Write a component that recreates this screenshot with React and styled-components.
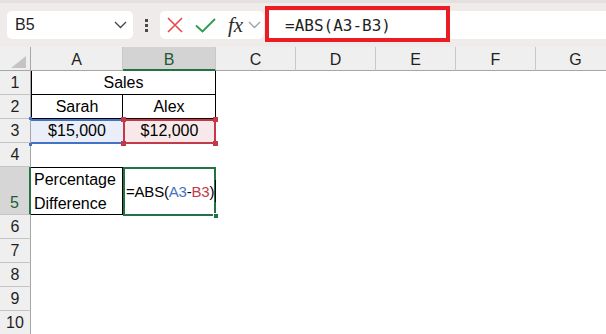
import React from 'react';
import styled, { createGlobalStyle } from 'styled-components';

const GlobalStyle = createGlobalStyle`
  *, *::before, *::after { box-sizing: border-box; }
  html, body { margin: 0; padding: 0; background: #fff; }
  body { font-family: "Liberation Sans", Arial, sans-serif; }
`;

const Frame = styled.div`
  width: 606px;
  height: 334px;
  overflow: hidden;
  display: flex;
  flex-direction: column;
  background: #fff;
`;

const Toolbar = styled.div`
  height: 47px;
  flex: none;
  display: flex;
  align-items: center;
  padding-left: 7px;
  background: #efebeb;
  border-top: 3px solid #e4e0e0;
`;

const NameBox = styled.div`
  width: 126px;
  height: 28px;
  display: flex;
  align-items: center;
  justify-content: space-between;
  padding: 0 6px 0 8px;
  background: #fff;
  border-radius: 5px;
  font-size: 16px;
  color: #1f1f1f;
`;

const Grip = styled.div`
  width: 27px;
  display: flex;
  flex-direction: column;
  align-items: center;
  gap: 2px;
`;

const Dot = styled.span`
  width: 3px;
  height: 3px;
  background: #4a4a4a;
`;

const FxBox = styled.div`
  width: 104px;
  height: 28px;
  display: flex;
  align-items: center;
  padding-left: 7px;
  gap: 12px;
  background: #fff;
  border-radius: 5px;
`;

const FxLabel = styled.span`
  font-family: "Liberation Serif", "Times New Roman", serif;
  font-style: italic;
  font-size: 21px;
  color: #2b2b2b;
  display: flex;
  align-items: center;
  gap: 5px;
`;

const FormulaBar = styled.div`
  position: relative;
  flex: 1;
  height: 28px;
  margin-left: 2px;
  display: flex;
  align-items: center;
  padding-left: 19px;
  background: #fff;
  border-radius: 5px 0 0 5px;
  font-family: "DejaVu Sans Mono", "Liberation Mono", monospace;
  font-size: 16px;
  color: #1f1f1f;
`;

/* red call-out drawn over the formula bar */
const Highlight = styled.div`
  position: absolute;
  top: -5px;
  left: -1px;
  width: 185px;
  height: 36px;
  border: 4px solid #ec1c24;
`;

const Sheet = styled.div`
  display: grid;
  grid-template-columns: 31px 92px 93px repeat(5, 80px);
  grid-template-rows: 24px 24px 24px 24px 24px 48px repeat(5, 24px);
`;

const Corner = styled.div`
  display: flex;
  align-items: flex-end;
  justify-content: flex-end;
  padding: 0 4px 2px 0;
  background: #efefef;
  border-right: 1px solid #a6a6a6;
  border-bottom: 1px solid #a6a6a6;
`;

const Triangle = styled.span`
  width: 15px;
  height: 12px;
  background: #c4c4c4;
  clip-path: polygon(100% 0, 100% 100%, 0 100%);
`;

const ColHead = styled.div`
  display: flex;
  align-items: center;
  justify-content: center;
  padding-top: 3px;
  font-size: 16px;
  background: ${p => (p.$sel ? '#d3d3d3' : '#efefef')};
  color: ${p => (p.$sel ? '#1d5a36' : '#1f1f1f')};
  border-right: 1px solid #c8c8c8;
  border-bottom: ${p => (p.$sel ? '2px solid #217346' : '1px solid #a6a6a6')};
`;

const RowHead = styled.div`
  display: flex;
  align-items: flex-end;
  justify-content: center;
  line-height: 22px;
  font-size: 16px;
  background: ${p => (p.$sel ? '#d6d6d6' : '#efefef')};
  color: ${p => (p.$sel ? '#1d5a36' : '#1f1f1f')};
  border-right: ${p => (p.$sel ? '2px solid #217346' : '1px solid #a6a6a6')};
  border-bottom: 1px solid #c4c4c4;
`;

const line = on => (on ? '1px solid #000' : 'none');

const Cell = styled.div`
  position: relative;
  display: flex;
  align-items: center;
  justify-content: ${p => (p.$align === 'left' ? 'flex-start' : 'center')};
  grid-column: ${p => (p.$span ? `span ${p.$span}` : 'auto')};
  padding: 0 3px;
  font-size: 16px;
  color: #000;
  white-space: nowrap;
  background: ${p => p.$bg || '#fff'};
  border-top: ${p => line(p.$edges?.includes('t'))};
  border-right: ${p => line(p.$edges?.includes('r'))};
  border-bottom: ${p => line(p.$edges?.includes('b'))};
  border-left: ${p => line(p.$edges?.includes('l'))};
`;

const WrapCell = styled(Cell)`
  display: block;
  white-space: normal;
  line-height: 24px;
  padding-top: 0;
`;

const RangeFrame = styled.div`
  position: absolute;
  z-index: 1;
  top: 0;
  bottom: -1px;
  left: 0;
  right: 0;
  border: 2px solid ${p => p.$color};
  ${p => p.$open && 'border-left: none; border-right: none;'}
  pointer-events: none;
`;

const Handle = styled.span`
  position: absolute;
  z-index: 2;
  width: ${p => p.$size || 5}px;
  height: ${p => p.$size || 5}px;
  background: ${p => p.$color};
  ${p => (p.$y === 'top' ? 'top: -2px;' : 'bottom: -3px;')}
  ${p => (p.$x === 'left' ? 'left: -2px;' : 'right: -2px;')}
`;

const FillHandle = styled.span`
  position: absolute;
  z-index: 2;
  right: -3px;
  bottom: -4px;
  width: 6px;
  height: 6px;
  background: #217346;
  border: 1px solid #fff;
`;

const Ref = styled.span`
  color: ${p => p.$color};
`;

const Caret = styled.span`
  position: relative;
  z-index: 3;
  display: inline-block;
  width: 1px;
  height: 22px;
  margin-left: 1px;
  background: #000;
`;

const Formula = styled.span`
  font-size: 15px;
  letter-spacing: -0.2px;
  display: flex;
  align-items: center;
`;

const BLUE = '#4472c4';
const RED = '#c4394a';
const columns = ['A', 'B', 'C', 'D', 'E', 'F', 'G'];

const Chevron = ({ color }) => (
  <svg width="13" height="8" viewBox="0 0 13 8">
    <polyline points="1,1 6.5,6.5 12,1" fill="none" stroke={color} strokeWidth="1.3" />
  </svg>
);

const Empties = ({ count }) =>
  Array.from({ length: count }, (_, i) => <Cell key={i} />);

const App = () => {
  return (
    <Frame>
      <GlobalStyle />
      <Toolbar>
        <NameBox>
          B5
          <Chevron color="#444" />
        </NameBox>
        <Grip>
          <Dot />
          <Dot />
          <Dot />
        </Grip>
        <FxBox>
          <svg width="16" height="16" viewBox="0 0 16 16">
            <path d="M1 1 L15 15 M15 1 L1 15" stroke="#e5484d" strokeWidth="1.6" />
          </svg>
          <svg width="21" height="15" viewBox="0 0 21 15">
            <polyline points="1,7.5 7.5,13.5 20,1" fill="none" stroke="#2f9a50" strokeWidth="1.8" />
          </svg>
          <FxLabel>
            fx
            <Chevron color="#a0a0a0" />
          </FxLabel>
        </FxBox>
        <FormulaBar>
          =ABS(A3-B3)
          <Highlight />
        </FormulaBar>
      </Toolbar>

      <Sheet>
        <Corner>
          <Triangle />
        </Corner>
        {columns.map(c => (
          <ColHead key={c} $sel={c === 'B'}>{c}</ColHead>
        ))}

        <RowHead>1</RowHead>
        <Cell $span={2} $edges="lrb">Sales</Cell>
        <Empties count={5} />

        <RowHead>2</RowHead>
        <Cell $edges="lrb">Sarah</Cell>
        <Cell $edges="rb">Alex</Cell>
        <Empties count={5} />

        <RowHead>3</RowHead>
        <Cell $bg="#e9eef8">
          $15,000
          <RangeFrame $color={BLUE} $open />
          <Handle $color={BLUE} $size={3} $x="left" $y="top" />
          <Handle $color={BLUE} $size={3} $x="left" $y="bottom" />
        </Cell>
        <Cell $bg="#f8e8ea">
          $12,000
          <RangeFrame $color={RED} />
          <Handle $color={RED} $x="left" $y="top" />
          <Handle $color={RED} $x="right" $y="top" />
          <Handle $color={RED} $x="left" $y="bottom" />
          <Handle $color={RED} $x="right" $y="bottom" />
        </Cell>
        <Empties count={5} />

        <RowHead>4</RowHead>
        <Empties count={7} />

        <RowHead $sel>5</RowHead>
        <WrapCell $align="left" $edges="trb">Percentage Difference</WrapCell>
        <Cell $align="left">
          <Formula>
            =ABS(<Ref $color={BLUE}>A3</Ref>-<Ref $color={RED}>B3</Ref>)
            <Caret />
          </Formula>
          <RangeFrame $color="#217346" />
          <FillHandle />
        </Cell>
        <Empties count={5} />

        {[6, 7, 8, 9, 10].map(n => (
          <React.Fragment key={n}>
            <RowHead>{n}</RowHead>
            <Empties count={7} />
          </React.Fragment>
        ))}
      </Sheet>
    </Frame>
  );
};

export default App;
